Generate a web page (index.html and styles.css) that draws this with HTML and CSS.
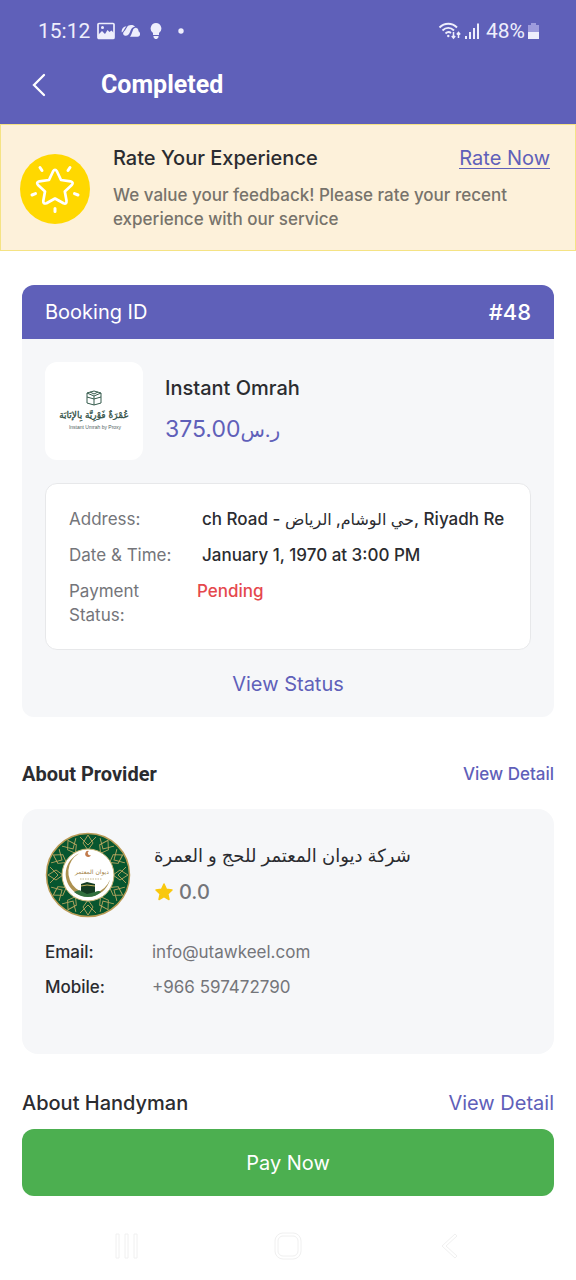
FILE: index.html
```html
<!DOCTYPE html>
<html lang="en">
<head>
<meta charset="utf-8">
<meta name="viewport" content="width=device-width, initial-scale=1">
<title>Completed</title>
<link rel="stylesheet" href="styles.css">
</head>
<body>
<header class="top">
  <div class="status">
    <span class="status-text">15:12</span>
    <svg class="status-image" width="18" height="18" viewBox="0 0 18 18"><rect x="1" y="1.500" width="16" height="15" rx="1" fill="none" stroke="currentColor" stroke-width="1.700"/><circle cx="5.500" cy="5.500" r="1.500" fill="currentColor"/><path d="M1 13l4-4 3 3 2.500-4 2 2 2-1.500L17 11v5H1z" fill="currentColor"/></svg>
    <svg class="status-cloud" width="20" height="16" viewBox="0 0 20 16" fill="currentColor"><path d="M.8 9.500C.2 6 2.500 3.200 5.500 3.500 3.500 5 3 8 .8 9.500zM3.500 12.500C1 11 2.500 9 4 7.500 6 5 6 2 10 2c2 0 3.500.7 4 1.700-3.500.3-4 3-5 5.300-1 2.500-3 4.500-5.500 3.500zM9 13.700c1.500-2 1.800-4 2.700-6C12.500 5.500 14 4.500 15.500 5c1.800.6 2 2.200 2 3.200 2 .8 2.500 5.500-1 5.500z"/></svg>
    <svg class="status-bulb" width="12" height="18" viewBox="0 0 12 18"><path d="M6 1a5.500 5.500 0 0 0-3 10v2h6v-2A5.500 5.500 0 0 0 6 1zM3.500 14h5v1.200L7 17H5l-1.500-1.800z" fill="currentColor"/></svg>
    <svg width="6" height="6" viewBox="0 0 6 6"><circle cx="3" cy="3" r="2.700" fill="currentColor"/></svg>
    <div class="status-right">
      <svg width="24" height="20" viewBox="0 0 24 20" fill="none" stroke="currentColor" stroke-width="1.900"><path d="M1.500 6.500c5-5 12.500-5 17.500 0M4.500 9.500c3.500-3.500 8-3.500 11.500 0M7.500 12.500c2-1.800 3.800-1.800 5.500-.5"/><circle cx="10.300" cy="15" r="1.200" fill="currentColor" stroke="none"/><path d="M15.500 11v6M13.800 15l1.700 2 1.700-2M20.500 17v-5.500M18.800 13.500l1.700-2 1.700 2" stroke-width="1.500"/></svg>
      <svg width="16" height="18" viewBox="0 0 16 18"><path d="M1 14h2v3H1zM5 10h2v7H5zM9 6h2v11H9zM13 1.500h2V17h-2z" fill="currentColor"/></svg>
      <span class="status-text status-percent">48%</span>
      <svg width="13" height="18" viewBox="0 0 13 18"><path d="M4 1h5v2h3v7H1V3h3z" fill="#9d9bdc"/><path d="M1 10h11v7H1z" fill="currentColor"/></svg>
    </div>
  </div>
  <div class="title-bar">
    <button class="back" type="button" aria-label="Back"><svg width="16" height="24" viewBox="0 0 16 24"><path d="M13 2L3 12l10 10" fill="none" stroke="#fff" stroke-width="2.300" stroke-linecap="round"/></svg></button>
    <h1 class="title">Completed</h1>
  </div>
</header>

<section class="rate">
  <svg class="rate-icon" width="70" height="70" viewBox="0 0 70 70"><circle cx="35" cy="35" r="35" fill="#ffd800"/><path d="M33 17.500q2-3.500 4 0l4 8.500 9.500 1.300q3.500 1 1.300 3.700l-7 6.500 1.700 9q.3 4-3 2.800L35 44.500l-8.500 4.800q-3.500 1-3.200-2.500l1.700-9.300-7-6.500q-2.200-2.700 1.300-3.700L29 26z" fill="none" stroke="#fff" stroke-width="2.700" stroke-linejoin="round"/><path d="M20 13.500l2 3M50 13.500l-2 3M12 41l3.500-1.400M58 41l-3.500-1.400M35 54.500v3" stroke="#fff" stroke-width="3" stroke-linecap="round"/></svg>
  <div class="rate-body">
    <div class="rate-head"><h2 class="heading">Rate Your Experience</h2><a class="rate-link" href="#">Rate Now</a></div>
    <p class="rate-text">We value your feedback! Please rate your recent experience with our service</p>
  </div>
</section>

<main class="content">
  <section class="booking">
    <div class="booking-head"><span>Booking ID</span><span class="booking-id">#48</span></div>
    <div class="booking-body">
      <div class="service">
        <svg class="service-logo" width="98" height="98" viewBox="0 0 98 98"><g fill="none" stroke="#355b4c" stroke-width="1"><path d="M42 31l7-2 7 2v10l-7 2-7-2zM42 31l7 3 7-3M49 34v9M42 35l7 2 7-2M45 30l4 2 4-2"/></g><text x="49" y="56" text-anchor="middle" class="logo-ar">عُمْرَةٌ فَوْرِيَّة بِالإنَابَة</text><text x="50" y="67" text-anchor="middle" class="logo-en">Instant Umrah by Proxy</text></svg>
        <div class="service-info"><h2 class="heading">Instant Omrah</h2><p class="price">375.00<span class="price-unit">ر.س</span></p></div>
      </div>
      <dl class="details">
        <div class="detail"><dt>Address:</dt><dd class="address">ch Road - <span class="address-ar">حي الوشام, الرياض</span>, Riyadh Re</dd></div>
        <div class="detail"><dt>Date &amp; Time:</dt><dd>January 1, 1970 at 3:00 PM</dd></div>
        <div class="detail detail-status"><dt>Payment Status:</dt><dd class="pending">Pending</dd></div>
      </dl>
      <a class="view-status" href="#">View Status</a>
    </div>
  </section>

  <div class="section-head"><h2 class="provider-title">About Provider</h2><a class="provider-link" href="#">View Detail</a></div>
  <section class="provider">
    <div class="provider-top">
      <svg width="86" height="86" viewBox="0 0 86 86">
        <defs><g id="knot"><path d="M43 3l5 8-5 7-5-7zM35 5l8 8 8-8"/></g></defs>
        <circle cx="43" cy="43" r="41.500" fill="#07562f" stroke="#b99b56" stroke-width="1.500"/>
        <g fill="none" stroke="#b9a760" stroke-width=".9"><use href="#knot"/><use href="#knot" transform="rotate(30 43 43)"/><use href="#knot" transform="rotate(60 43 43)"/><use href="#knot" transform="rotate(90 43 43)"/><use href="#knot" transform="rotate(120 43 43)"/><use href="#knot" transform="rotate(150 43 43)"/><use href="#knot" transform="rotate(180 43 43)"/><use href="#knot" transform="rotate(210 43 43)"/><use href="#knot" transform="rotate(240 43 43)"/><use href="#knot" transform="rotate(270 43 43)"/><use href="#knot" transform="rotate(300 43 43)"/><use href="#knot" transform="rotate(330 43 43)"/></g>
        <circle cx="43" cy="43" r="26" fill="#fff" stroke="#c9b777" stroke-width="1"/>
        <path d="M34 21.500a22.500 22.500 0 1 0 31 26A21.500 21.500 0 1 1 34 21.500z" fill="#ad9150"/>
        <path d="M44 19a3 3 0 1 0 2 4 2.200 2.200 0 1 1-2-4z" fill="#c27b4c"/>
        <text x="47" y="42" text-anchor="middle" class="seal-ar">ديوان المعتمر</text>
        <path d="M35 47h22" stroke="#c8b98b" stroke-width="1" stroke-dasharray="1.500 1"/>
        <path d="M36 52l6-2 8 2v9l-8 2-6-3z" fill="#143c23"/><path d="M36 54l6-1 8 1" fill="none" stroke="#c6b45e" stroke-width="1"/><path d="M29 60q6-3 7-1l6 3 8-2q4-2 6 0-5 5-13 5t-14-5z" fill="#31703e"/>
      </svg>
      <div class="provider-info">
        <p class="provider-name" lang="ar" dir="rtl">شركة ديوان المعتمر للحج و العمرة</p>
        <p class="rating"><svg width="20" height="20" viewBox="0 0 20 20"><path d="M10 2l2.400 5.300 5.600.7-4.200 3.900 1.200 5.600-5-2.800-5 2.800 1.200-5.600L2 8l5.600-.7z" fill="#f9c80e" stroke="#f9c80e" stroke-width="1.500" stroke-linejoin="round"/></svg>0.0</p>
      </div>
    </div>
    <dl class="contact"><dt>Email:</dt><dd>info@utawkeel.com</dd><dt>Mobile:</dt><dd>+966 597472790</dd></dl>
  </section>

  <div class="section-head handyman"><h2 class="heading">About Handyman</h2><a class="handyman-link" href="#">View Detail</a></div>
  <button class="pay" type="button">Pay Now</button>
</main>

<nav class="system-nav">
  <button type="button" aria-label="Recent apps"><svg width="28" height="30" viewBox="0 0 28 30"><path d="M3 3h3v24H3zM12 3h3v24h-3zM21 3h3v24h-3z"/></svg></button>
  <button type="button" aria-label="Home"><svg width="28" height="30" viewBox="0 0 28 30"><rect x="1" y="2" width="26" height="26" rx="8"/><rect x="4" y="5" width="20" height="20" rx="5"/></svg></button>
  <button type="button" aria-label="Back"><svg width="28" height="30" viewBox="0 0 28 30"><path d="M20 3L7 15l13 12 2-2-11-10L22 5z"/></svg></button>
</nav>
</body>
</html>
```
FILE: styles.css
```css
* { box-sizing: border-box; }
body { margin: 0; background: #fff; color: #2b2c30; font-family: Inter, "DejaVu Sans", sans-serif; font-size: 18px; line-height: 24px; }
h1, h2, p, dl, dd { margin: 0; }
a { color: #5f60b9; text-decoration: none; }
button { border: 0; background: none; padding: 0; font-family: inherit; }
svg { display: block; flex: none; }

.top { background: #5f60b9; color: #fff; padding-bottom: 16px; }
.status { display: flex; align-items: center; height: 62px; padding: 0 36px 0 38px; color: #eeeefc; }
.status-text { font-family: Roboto, sans-serif; font-size: 21px; }
.status-image { margin-left: 7px; }
.status-cloud { margin-left: 6px; }
.status-bulb { margin: 0 16px 0 9px; }
.status-right { display: flex; align-items: center; gap: 2px; margin-left: auto; }
.status-percent { margin-left: 4px; }
.title-bar { display: flex; align-items: center; height: 46px; padding-left: 31px; }
.back { width: 70px; }
.title { font-family: Roboto, sans-serif; font-size: 25px; font-weight: 700; line-height: 32px; }

.heading { font-size: 20px; font-weight: 500; line-height: 24px; }
.rate { display: flex; align-items: center; gap: 23px; padding: 21px 25px 19px 19px; border: 1px solid #f5e384; background: #fdf1da; }
.rate-body { flex: 1; }
.rate-head { display: flex; justify-content: space-between; align-items: center; }
.rate-link { font-size: 20px; line-height: 20px; border-bottom: 1px solid #5f60b9; }
.rate-text { margin-top: 13px; color: #77736b; font-size: 17px; font-weight: 500; line-height: 24px; }

.content { padding: 34px 22px 0; }
.booking { border-radius: 12px; overflow: hidden; background: #f6f7f9; }
.booking-head { display: flex; justify-content: space-between; align-items: center; height: 54px; padding: 0 23px; background: #5f60b9; color: #fff; font-size: 20px; }
.booking-id { font-size: 22px; font-weight: 500; }
.booking-body { padding: 23px 23px 21px; }
.service { display: flex; gap: 22px; }
.service-logo { background: #fff; border-radius: 12px; }
.service-info { padding-top: 14px; }
.logo-ar { font-family: "DejaVu Sans", sans-serif; font-size: 9px; fill: #304f45; stroke: #304f45; stroke-width: 0.3px; }
.logo-en { font-family: "Liberation Sans", sans-serif; font-size: 5px; fill: #52645f; }
.price { margin-top: 16px; font-size: 23px; line-height: 26px; color: #5f60b9; }
.price-unit { font-size: 20px; }
.details { display: grid; gap: 12px; margin-top: 23px; padding: 23px 23px 22px; background: #fff; border: 1px solid #e7e8ea; border-radius: 12px; }
.detail { display: grid; grid-template-columns: 105px 1fr; column-gap: 28px; }
.detail-status { column-gap: 23px; }
.detail dt { color: #74757a; font-size: 17px; }
.detail dd { font-size: 17px; font-weight: 500; min-width: 0; }
.address { overflow: hidden; white-space: nowrap; }
.address-ar { font-size: 16px; }
.detail .pending { color: #e5484d; }
.view-status { display: block; width: fit-content; margin: 22px auto 0; font-size: 20px; }

.section-head { display: flex; justify-content: space-between; align-items: center; margin-top: 45px; }
.provider-title { font-family: Roboto, sans-serif; font-size: 20px; font-weight: 700; line-height: 24px; }
.provider-link { font-size: 17px; font-weight: 500; }
.provider { margin-top: 23px; padding: 23px 23px 55px; border-radius: 16px; background: #f6f7f9; }
.provider-top { display: flex; gap: 23px; }
.provider-info { padding-top: 12px; }
.provider-name { font-size: 18px; }
.rating { display: flex; align-items: center; gap: 5px; margin-top: 12px; font-size: 20px; line-height: 24px; font-weight: 500; color: #74757a; }
.contact { display: grid; grid-template-columns: 107px 1fr; row-gap: 11px; margin-top: 22px; font-size: 17px; }
.contact dt { font-weight: 500; }
.contact dd { color: #74757a; }
.seal-ar { font-family: "DejaVu Sans", sans-serif; font-size: 6px; fill: #a28145; }
.handyman { margin-top: 37px; }
.handyman-link { font-size: 20px; }
.pay { display: block; width: 100%; height: 67px; margin-top: 14px; border-radius: 12px; background: #4caf50; color: #fff; font-size: 20px; }

.system-nav { display: grid; grid-template-columns: repeat(3, 1fr); justify-items: center; padding: 35px 46px 19px; }
.system-nav svg { fill: none; stroke: #f0f0f0; stroke-width: 1px; }
```
